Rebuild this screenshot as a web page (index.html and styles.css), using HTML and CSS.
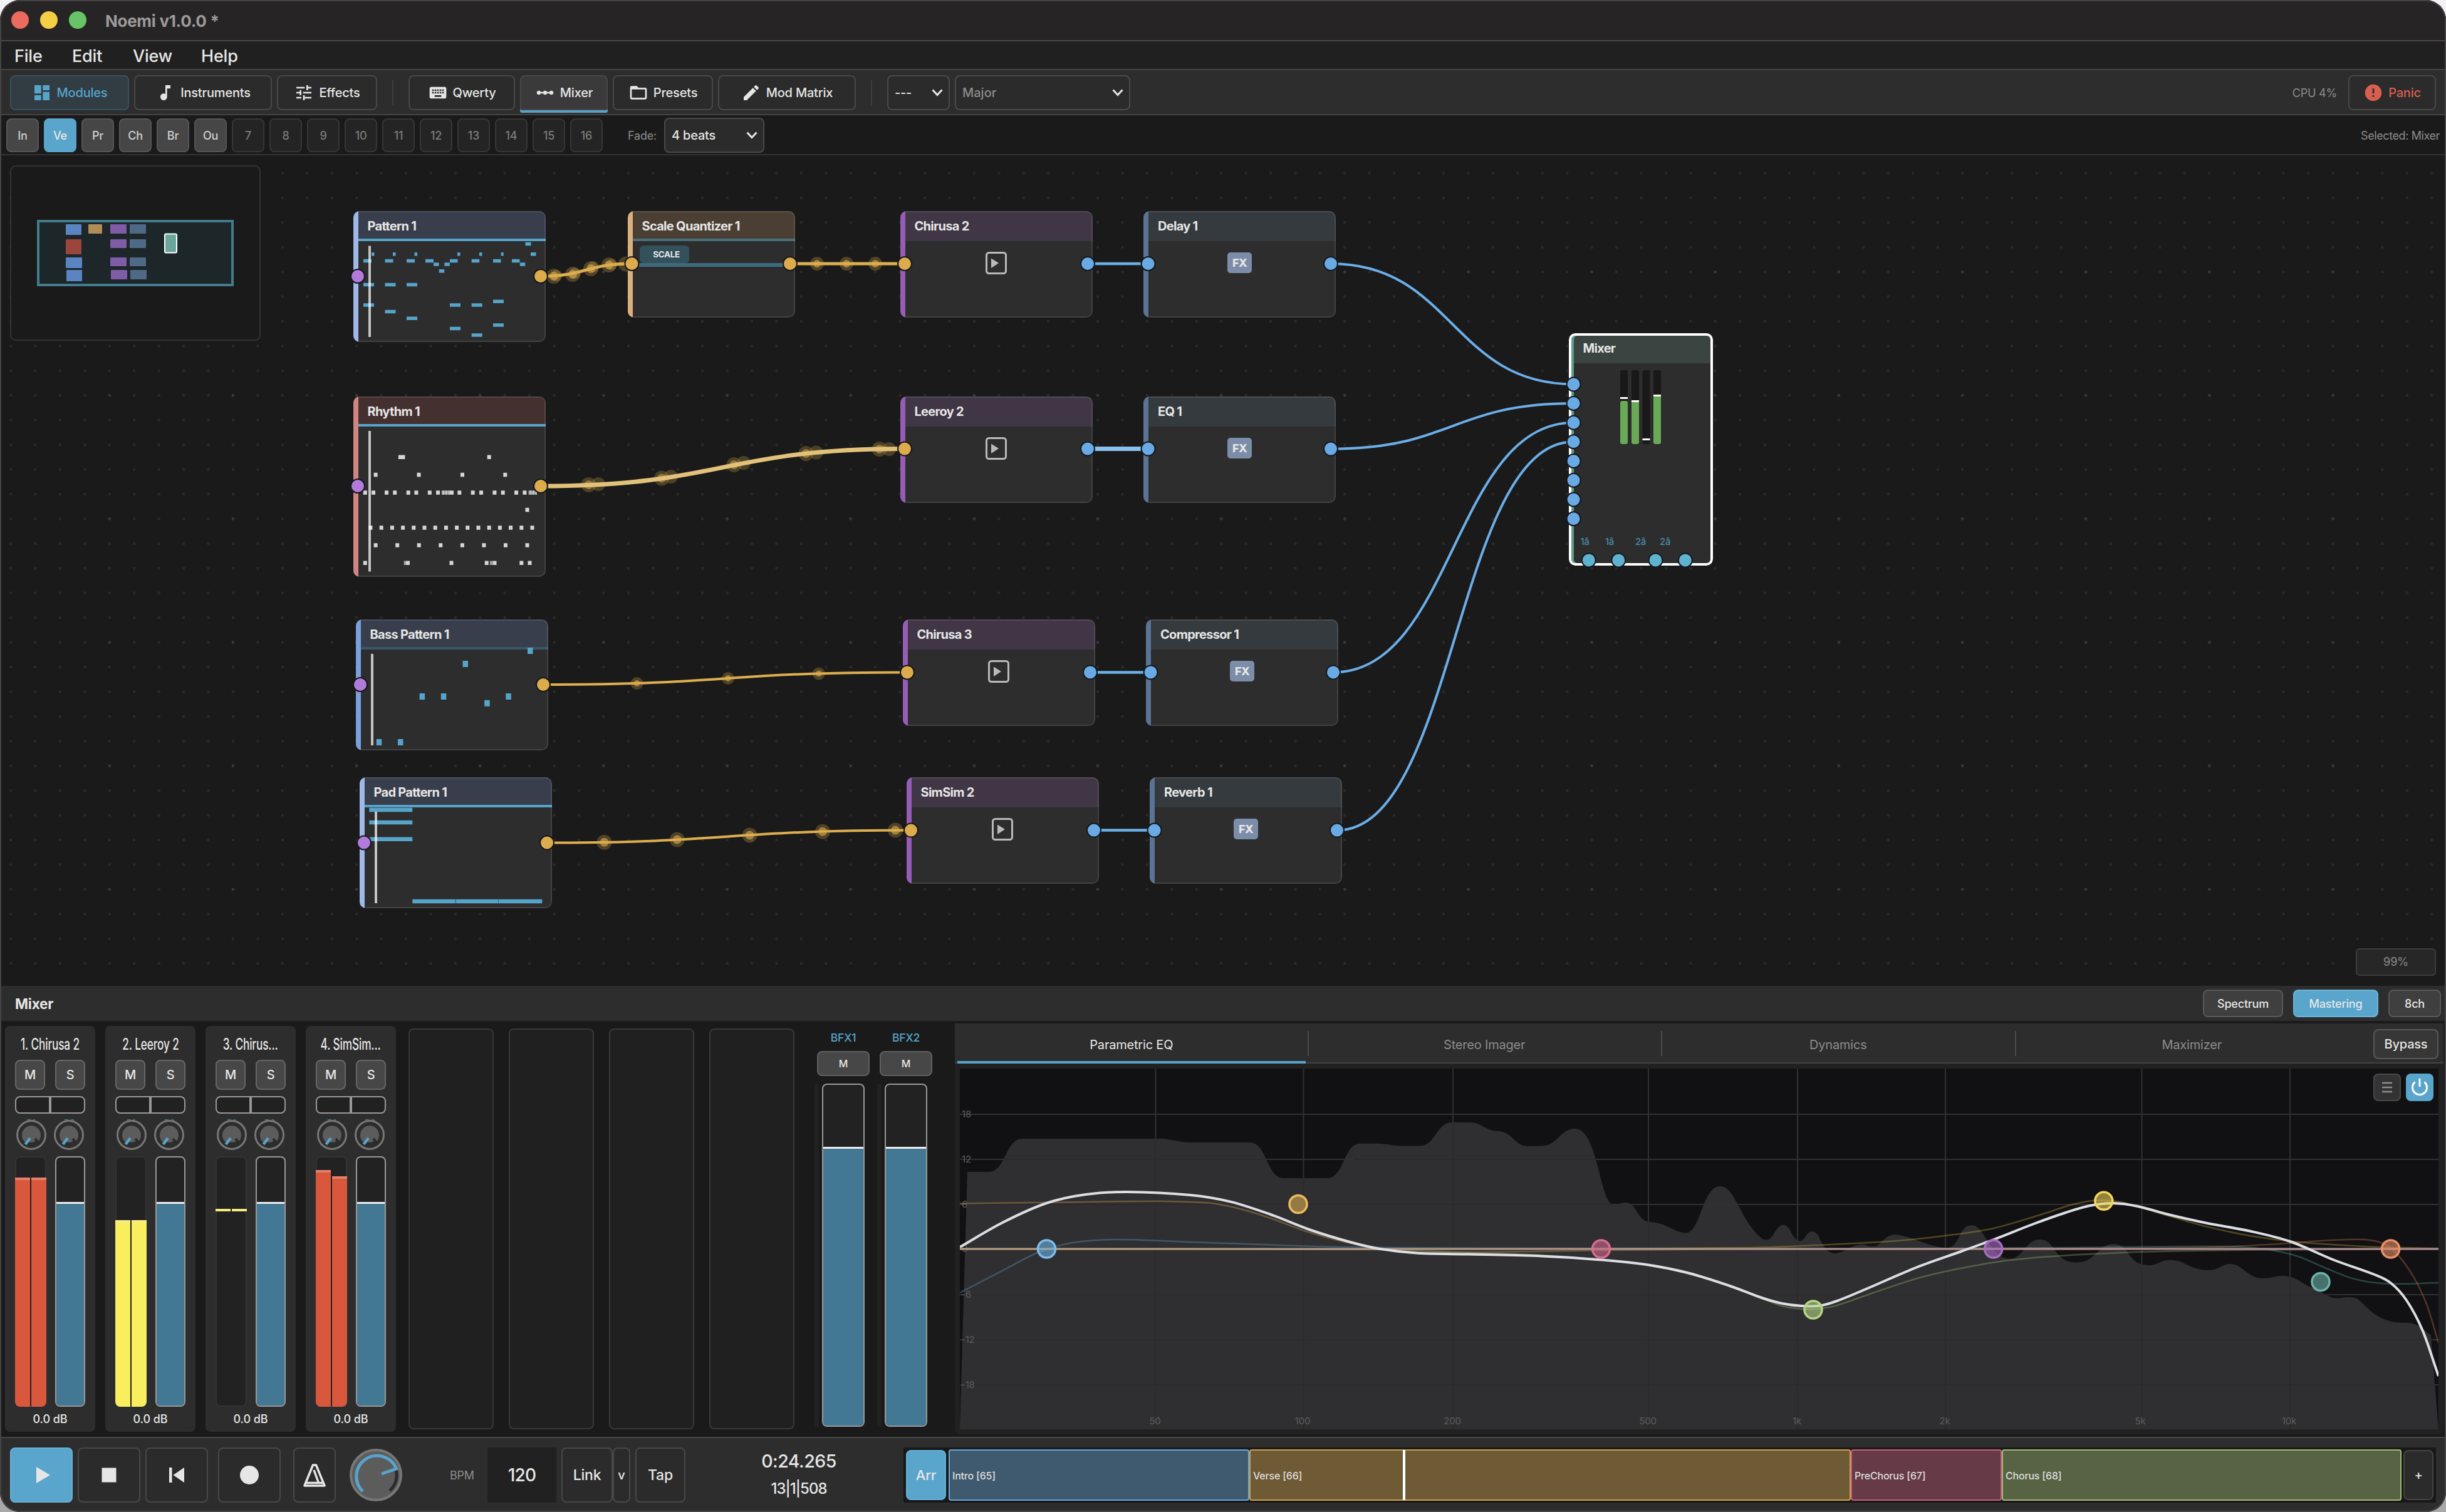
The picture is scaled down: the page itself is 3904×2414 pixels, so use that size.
FILE: index.html
```html
<!DOCTYPE html>
<html lang="en">
<head>
  <meta charset="UTF-8" />
  <meta name="viewport" content="width=device-width, initial-scale=1.0"/>
  <title>Noemi v1.0.0</title>
  <link rel="stylesheet" href="styles.css">
</head>
<body>

  <!-- shared icons -->
  <svg class="defs" width="0" height="0">
    <symbol id="i-dashboard" viewBox="0 0 24 24"><path d="M3 13h8V3H3v10zm0 8h8v-6H3v6zm10 0h8V11h-8v10zm0-18v6h8V3h-8z"/></symbol>
    <symbol id="i-note" viewBox="0 0 24 24"><path d="M12 3v10.55c-.59-.34-1.27-.55-2-.55-2.21 0-4 1.79-4 4s1.79 4 4 4 4-1.79 4-4V7h4V3h-6z"/></symbol>
    <symbol id="i-tune" viewBox="0 0 24 24"><path d="M3 17v2h6v-2H3zM3 5v2h10V5H3zm10 16v-2h8v-2h-8v-2h-2v6h2zM7 9v2H3v2h4v2h2V9H7zm14 4v-2H11v2h10zm-6-4h2V7h4V5h-4V3h-2v6z"/></symbol>
    <symbol id="i-keyboard" viewBox="0 0 24 24"><path d="M20 5H4c-1.1 0-1.99.9-1.99 2L2 17c0 1.1.9 2 2 2h16c1.1 0 2-.9 2-2V7c0-1.1-.9-2-2-2zm-9 3h2v2h-2V8zm0 3h2v2h-2v-2zM8 8h2v2H8V8zm0 3h2v2H8v-2zm-1 2H5v-2h2v2zm0-3H5V8h2v2zm9 7H8v-2h8v2zm0-4h-2v-2h2v2zm0-3h-2V8h2v2zm3 3h-2v-2h2v2zm0-3h-2V8h2v2z"/></symbol>
    <symbol id="i-linear" viewBox="0 0 24 24"><path d="M19.5 9.5c-1.03 0-1.9.62-2.29 1.5h-2.92C13.9 10.12 13.03 9.5 12 9.5s-1.9.62-2.29 1.5H6.79C6.4 10.12 5.53 9.5 4.5 9.5 3.12 9.5 2 10.62 2 12s1.12 2.5 2.5 2.5c1.03 0 1.9-.62 2.29-1.5h2.92c.39.88 1.26 1.5 2.29 1.5s1.9-.62 2.29-1.5h2.92c.39.88 1.26 1.5 2.29 1.5 1.38 0 2.5-1.12 2.5-2.5s-1.12-2.5-2.5-2.5z"/></symbol>
    <symbol id="i-folder" viewBox="0 0 24 24"><path d="M20 6h-8l-2-2H4c-1.1 0-1.99.9-1.99 2L2 18c0 1.1.9 2 2 2h16c1.1 0 2-.9 2-2V8c0-1.1-.9-2-2-2zm0 12H4V8h16v10z"/></symbol>
    <symbol id="i-pencil" viewBox="0 0 24 24"><path d="M3 17.25V21h3.75L17.81 9.94l-3.75-3.75L3 17.25zM20.71 7.04c.39-.39.39-1.02 0-1.41l-2.34-2.34c-.39-.39-1.02-.39-1.41 0l-1.83 1.83 3.75 3.75 1.83-1.83z"/></symbol>
    <symbol id="i-error" viewBox="0 0 24 24"><path d="M12 2C6.48 2 2 6.48 2 12s4.48 10 10 10 10-4.48 10-10S17.52 2 12 2zm1 15h-2v-2h2v2zm0-4h-2V7h2v6z"/></symbol>
    <symbol id="i-chevron" viewBox="0 0 18 12"><path d="M1.5 1.5L9 9.5l7.5-8" fill="none" stroke="#e6e6e6" stroke-width="3"/></symbol>
    <symbol id="i-play-box" viewBox="0 0 34 36"><rect x="1.5" y="1.5" width="31" height="33" rx="4" fill="none" stroke="#bababa" stroke-width="3"/><path d="M9 10.5L21 18 9 26z" fill="#bababa"/></symbol>
    <symbol id="i-send" viewBox="0 0 52 52">
      <circle cx="26" cy="26" r="22.5" fill="#2d2d2d" stroke="#777" stroke-width="3"/>
      <path d="M15.5 37A15 15 0 1 1 36.5 37L34 34l-3 3a14 14 0 0 1-10 0z" fill="#5c5c5c"/>
      <path d="M32 32l6 7" stroke="#2b2b2b" stroke-width="4"/>
      <path d="M24 31l-7.5 10" stroke="#57a4cb" stroke-width="4.5"/>
    </symbol>
  </svg>

  <div class="app">
    <header class="titlebar">
      <span class="light red"></span><span class="light yellow"></span><span class="light green"></span>
      <span class="app-title">Noemi v1.0.0 *</span>
    </header>

    <nav class="menubar">
      <span class="m-file">File</span><span class="m-edit">Edit</span><span class="m-view">View</span><span class="m-help">Help</span>
    </nav>

    <div class="toolbar">
      <button class="tool modules"><svg><use href="#i-dashboard"/></svg>Modules</button>
      <button class="tool instruments"><svg><use href="#i-note"/></svg>Instruments</button>
      <button class="tool effects"><svg><use href="#i-tune"/></svg>Effects</button>
      <span class="sep"></span>
      <button class="tool qwerty"><svg><use href="#i-keyboard"/></svg>Qwerty</button>
      <button class="tool mixer-btn"><svg><use href="#i-linear"/></svg>Mixer</button>
      <button class="tool presets"><svg><use href="#i-folder"/></svg>Presets</button>
      <button class="tool matrix"><svg><use href="#i-pencil"/></svg>Mod Matrix</button>
      <span class="sep"></span>
      <div class="select key"><span>---</span><svg><use href="#i-chevron"/></svg></div>
      <div class="select scale"><span>Major</span><svg><use href="#i-chevron"/></svg></div>
      <span class="cpu">CPU 4%</span>
      <button class="tool panic"><svg><use href="#i-error"/></svg>Panic</button>
    </div>

    <div class="scenebar">
      <button class="scene used">In</button>
      <button class="scene active">Ve</button>
      <button class="scene used">Pr</button>
      <button class="scene used">Ch</button>
      <button class="scene used">Br</button>
      <button class="scene used">Ou</button>
      <button class="scene">7</button>
      <button class="scene">8</button>
      <button class="scene">9</button>
      <button class="scene">10</button>
      <button class="scene">11</button>
      <button class="scene">12</button>
      <button class="scene">13</button>
      <button class="scene">14</button>
      <button class="scene">15</button>
      <button class="scene">16</button>
      <span class="fade">Fade:</span>
      <div class="select beats"><span>4 beats</span><svg><use href="#i-chevron"/></svg></div>
      <span class="selected">Selected: Mixer</span>
    </div>

    <main class="canvas">
      <svg class="layer" viewBox="0 248 3904 1326">
        <defs>
          <pattern id="dots" x="15.1" y="274.4" width="39.43" height="39.43" patternUnits="userSpaceOnUse"><rect width="4" height="4" fill="#2a2a2a"/></pattern>
          <pattern id="dots-major" x="172.8" y="432.1" width="197.15" height="197.15" patternUnits="userSpaceOnUse"><rect width="4" height="4" fill="#383838"/></pattern>
        </defs>
        <rect x="0" y="268" width="3904" height="1280" fill="url(#dots)"/>
        <rect x="0" y="268" width="3904" height="1280" fill="url(#dots-major)"/>
      </svg>

      <!-- overview -->
      <svg class="minimap" viewBox="16 264 400 280">
        <rect x="17" y="265" width="398" height="278" rx="8" fill="#1a1a1a" stroke="#333" stroke-width="2"/>
        <rect x="61" y="353" width="310" height="102" fill="#1d2629" stroke="#427c8e" stroke-width="4"/>
        <g fill="#5b85c2"><rect x="105" y="358" width="25" height="17" rx="1"/><rect x="105" y="411" width="26" height="17" rx="1"/><rect x="106" y="431" width="25" height="18" rx="1"/></g>
        <rect x="105" y="382" width="25" height="24" rx="1" fill="#9b453d"/>
        <rect x="141" y="358" width="22" height="15" rx="1" fill="#b18d59"/>
        <g fill="#7e5ca6"><rect x="176" y="358" width="26" height="15" rx="1"/><rect x="176" y="382" width="26" height="14" rx="1"/><rect x="176" y="411" width="26" height="14" rx="1"/><rect x="177" y="431" width="26" height="15" rx="1"/></g>
        <g fill="#4f6a86"><rect x="207" y="358" width="26" height="15" rx="1"/><rect x="207" y="382" width="26" height="14" rx="1"/><rect x="207" y="411" width="26" height="14" rx="1"/><rect x="208" y="431" width="26" height="15" rx="1"/></g>
        <rect x="263" y="373.5" width="19" height="30" rx="2" fill="#6aa69b" stroke="#fff" stroke-width="2"/>
      </svg>

      <!-- modules -->
      <section class="node pattern tall n-pattern1"><h3>Pattern 1</h3>
        <svg class="notes"><path stroke="#57a4cb" stroke-width="5.5" d="M274.5 52.6h9M29 68.8h4.5M63 68.8h4.5M97.5 68.8h4.5M166 68.8h4.5M201 68.8h4.5M235.7 68.8h4M283 68.8h8.5M16 79.5h13M50.5 79.5h13M85 79.5h13M115 79.5h13M154 79.5h12.5M188.7 79.5h12.5M223 79.5h12.5M253 79.5h12.5M128 85h8.5M145.4 85h8.5M265.8 85h8.5M136.7 95.7h8.5M16 117.4h17M50.5 117.4h17M85 117.4h17M223 144.3h17M16 149.9h17M154 149.9h17M188.7 149.9h17M50.5 160.5h17M85 171.2h17M223 181.9h17M154 187.4h17M188.7 198.1h17"/><path class="playhead" d="M26 55.4V201"/></svg>
      </section>
      <section class="node quant n-quant"><h3>Scale Quantizer 1</h3><span class="scale-line"></span><span class="scale-tag">SCALE</span></section>
      <section class="node synth n-chirusa2"><h3>Chirusa 2</h3><svg class="play-box"><use href="#i-play-box"/></svg></section>
      <section class="node fx n-delay"><h3>Delay 1</h3><span class="fx-tag">FX</span></section>

      <section class="node rhythm n-rhythm"><h3>Rhythm 1</h3>
        <svg class="notes"><g stroke="#d6d6d6" stroke-width="6.5"><path d="M71.9 96.8h10.5M213.7 96.8h6M32.6 125h6M101.5 125h6M171 125h6M239.3 125h6M15.8 153.4h6M29 153.4h6M50 153.4h6M63.2 153.4h6M84.7 153.4h6M97.4 153.4h6M118.8 153.4h6M132 153.4h6M154 153.4h6M166.3 153.4h6M187.7 153.4h6M201 153.4h6M222.4 153.4h6M235.7 153.4h6M257 153.4h6M270.4 153.4h6M274.5 181h6M15.8 265.7h6M84 265.7h6M153.5 265.7h6M209.7 265.7h6M222.5 265.7h6M265.3 265.7h6M278.5 265.7h6"/><path stroke-dasharray="6 11.2" d="M24.5 209.5H290"/><path stroke-dasharray="6 28.56" d="M32.6 237.6H282"/><path stroke="#a2a2a2" d="M140.8 153.4h13M279.5 153.4h13.5M80.6 265.7h3.4M217.8 265.7h4.7"/><path stroke-dasharray="1.5 3" d="M143 153.4h11M282 153.4h11"/></g><path class="playhead" d="M26 55V279.5"/></svg>
      </section>
      <section class="node synth n-leeroy"><h3>Leeroy 2</h3><svg class="play-box"><use href="#i-play-box"/></svg></section>
      <section class="node fx n-eq"><h3>EQ 1</h3><span class="fx-tag">FX</span></section>

      <section class="node pattern tall dim n-bass"><h3>Bass Pattern 1</h3>
        <svg class="notes"><path stroke="#57a4cb" stroke-width="10" d="M101.6 123h8.5M135.8 123h8.5M170.5 71h8.5M205.2 133.7h8.5M239.3 123h8.5M274 50h8.5M32.7 196h8.5M67 196h8.5"/><path class="playhead" d="M26 55V201"/></svg>
      </section>
      <section class="node synth n-chirusa3"><h3>Chirusa 3</h3><svg class="play-box"><use href="#i-play-box"/></svg></section>
      <section class="node fx n-comp"><h3>Compressor 1</h3><span class="fx-tag">FX</span></section>

      <section class="node pattern tall n-pad"><h3>Pad Pattern 1</h3>
        <svg class="notes"><path stroke="#57a4cb" stroke-width="6.5" d="M15.3 52h69M15.3 72h69M15.3 98.7h69M84.3 198h68.5M153.5 198h68M222 198h69.3"/><path class="playhead" d="M26 55V201"/></svg>
      </section>
      <section class="node synth n-simsim"><h3>SimSim 2</h3><svg class="play-box"><use href="#i-play-box"/></svg></section>
      <section class="node fx n-reverb"><h3>Reverb 1</h3><span class="fx-tag">FX</span></section>

      <section class="node mixer n-mixer"><h3>Mixer</h3></section>

      <!-- cables and ports -->
      <svg class="layer" viewBox="0 248 3904 1326">
        <g fill="#dcae4f" fill-opacity=".26">
          <circle cx="939.5" cy="774" r="12"/><circle cx="955" cy="773" r="11"/><circle cx="1056" cy="763.6" r="12"/><circle cx="1071" cy="761" r="11"/><circle cx="1171.6" cy="742" r="12"/><circle cx="1187" cy="739" r="11"/><circle cx="1286.4" cy="724" r="12"/><circle cx="1302.7" cy="722.5" r="11"/><circle cx="1403.6" cy="717" r="12"/><circle cx="1419" cy="717" r="11"/>
        </g>
        <g fill="#dcae4f" fill-opacity=".5">
          <circle cx="939.5" cy="774" r="7"/><circle cx="1056" cy="763.6" r="7"/><circle cx="1171.6" cy="742" r="7"/><circle cx="1286.4" cy="724" r="7"/><circle cx="1403.6" cy="717" r="7"/>
        </g>
        <g fill="none" stroke="#dcae4f" stroke-width="5">
          <path d="M863 441C936 441 936 421 1008 421M1261 421H1444"/>
          <path stroke="#e2c27a" stroke-width="7" d="M863 776C1153 776 1153 716.6 1444 716.6"/>
          <path stroke-width="4" d="M867 1093C1158 1093 1158 1073.4 1448 1073.4M873 1345.5C1163 1345.5 1163 1325.6 1454 1325.6"/>
        </g>
        <g fill="none" stroke="#6baee8" stroke-width="4">
          <path stroke-width="4.500" d="M1736 421H1833M1740 1073.4H1837M1746 1325.6H1843"/>
          <path stroke="#8ac0ee" stroke-width="7" d="M1736 716.6H1833"/>
          <path d="M2124 421C2318 421 2318 613.4 2511.6 613.4M2124 716.6C2318 716.6 2318 644 2511.6 644M2128 1073.4C2320 1073.4 2320 674.7 2511.6 674.7M2134 1325.6C2323 1325.6 2323 705.3 2511.6 705.3"/>
        </g>
        <g fill="#dcae4f" fill-opacity=".28">
          <circle cx="884" cy="441" r="12"/><circle cx="914" cy="438" r="12"/><circle cx="943" cy="429" r="12"/><circle cx="972" cy="423" r="12"/><circle cx="999" cy="421.5" r="12"/>
          <circle cx="888" cy="440" r="9"/><circle cx="918" cy="436" r="9"/><circle cx="947" cy="426" r="9"/><circle cx="976" cy="422.5" r="9"/>
          <circle cx="1304" cy="421" r="11"/><circle cx="1351" cy="421" r="11"/><circle cx="1397" cy="421" r="11"/>
          <circle cx="1016.5" cy="1091" r="10"/><circle cx="1162" cy="1083" r="10"/><circle cx="1306.8" cy="1075.5" r="10"/>
          <circle cx="964.5" cy="1344.7" r="12"/><circle cx="1080.8" cy="1340.5" r="12"/><circle cx="1196.6" cy="1333.5" r="12"/><circle cx="1313" cy="1327.7" r="12"/><circle cx="1429" cy="1325.6" r="12"/>
        </g>
        <g fill="#dcae4f" fill-opacity=".6">
          <circle cx="884" cy="441" r="7"/><circle cx="914" cy="438" r="7"/><circle cx="943" cy="429" r="7"/><circle cx="972" cy="423" r="7"/>
          <circle cx="1304" cy="421" r="6"/><circle cx="1351" cy="421" r="6"/><circle cx="1397" cy="421" r="6"/>
          <circle cx="1016.5" cy="1091" r="5"/><circle cx="1162" cy="1083" r="5"/><circle cx="1306.8" cy="1075.5" r="5"/>
          <circle cx="964.5" cy="1344.7" r="7"/><circle cx="1080.8" cy="1340.5" r="7"/><circle cx="1196.6" cy="1333.5" r="7"/><circle cx="1313" cy="1327.7" r="7"/><circle cx="1429" cy="1325.6" r="7"/>
        </g>
        <g fill="#b17bdb" class="port"><circle cx="571" cy="441" r="11"/><circle cx="571" cy="776" r="11"/><circle cx="575" cy="1093" r="11"/><circle cx="581" cy="1345.5" r="11"/></g>
        <g fill="#dcab4b" class="port"><circle cx="863" cy="441" r="11"/><circle cx="1008.4" cy="421" r="11"/><circle cx="1261" cy="421" r="11"/><circle cx="1444" cy="421" r="11"/><circle cx="863" cy="776" r="11"/><circle cx="1444" cy="716.6" r="11"/><circle cx="867" cy="1093" r="11"/><circle cx="1448" cy="1073.4" r="11"/><circle cx="873" cy="1345.5" r="11"/><circle cx="1454" cy="1325.6" r="11"/></g>
        <g fill="#69aae5" class="port">
          <circle cx="1736" cy="421" r="11"/><circle cx="1832.6" cy="421" r="11"/><circle cx="2124" cy="421" r="11"/>
          <circle cx="1736" cy="716.6" r="11"/><circle cx="1832.6" cy="716.6" r="11"/><circle cx="2124" cy="716.6" r="11"/>
          <circle cx="1740" cy="1073.4" r="11"/><circle cx="1836.6" cy="1073.4" r="11"/><circle cx="2128" cy="1073.4" r="11"/>
          <circle cx="1746" cy="1325.6" r="11"/><circle cx="1842.6" cy="1325.6" r="11"/><circle cx="2134" cy="1325.6" r="11"/>
          <circle cx="2511.6" cy="613.4" r="11"/><circle cx="2511.6" cy="644" r="11"/><circle cx="2511.6" cy="674.7" r="11"/><circle cx="2511.6" cy="705.3" r="11"/><circle cx="2511.6" cy="736" r="11"/><circle cx="2511.6" cy="766.7" r="11"/><circle cx="2511.6" cy="797.5" r="11"/><circle cx="2511.6" cy="828.3" r="11"/>
        </g>
        <g fill="#5fb3cf" class="port"><circle cx="2535.8" cy="894.4" r="11"/><circle cx="2583.3" cy="894.4" r="11"/><circle cx="2642.4" cy="894.4" r="11"/><circle cx="2689.8" cy="894.4" r="11"/></g>
        <g class="bus-label"><text x="2529.5" y="870">1â</text><text x="2569" y="870">1â</text><text x="2618.5" y="870">2â</text><text x="2657.6" y="870">2â</text></g>
        <g fill="#191919"><rect x="2586" y="591" width="12" height="118" rx="3"/><rect x="2604" y="591" width="12" height="118" rx="3"/><rect x="2621.5" y="591" width="12" height="118" rx="3"/><rect x="2639" y="591" width="12" height="118" rx="3"/></g>
        <g fill="#6aaa57"><rect x="2586" y="640" width="12" height="69" rx="3"/><rect x="2604" y="640" width="12" height="69" rx="3"/><rect x="2639" y="631" width="12" height="78" rx="3"/></g>
        <g fill="#fff"><rect x="2586" y="634" width="12" height="3"/><rect x="2604" y="639" width="12" height="3"/><rect x="2621.5" y="700" width="12" height="3"/><rect x="2639" y="630" width="12" height="3"/></g>
      </svg>

      <span class="zoom">99%</span>
    </main>

    <div class="panel-head">
      <h2>Mixer</h2>
      <button class="pill spectrum">Spectrum</button>
      <button class="pill mastering">Mastering</button>
      <button class="pill eight">8ch</button>
    </div>

    <div class="panel">
      <div class="strip">
        <div class="name"><span>1. Chirusa 2</span></div>
        <div class="ms"><button>M</button><button>S</button></div>
        <div class="pan"></div>
        <div class="sends"><svg><text x="18" y="12">B1</text><use href="#i-send"/></svg><svg><text x="18" y="12">B2</text><use href="#i-send"/></svg></div>
        <div class="levels">
          <div class="meter"><i class="hot" style="height:366px"></i><i class="hot" style="height:366px"></i></div>
          <div class="fader"><i></i></div>
        </div>
        <div class="db">0.0 dB</div>
      </div>
      <div class="strip">
        <div class="name"><span>2. Leeroy 2</span></div>
        <div class="ms"><button>M</button><button>S</button></div>
        <div class="pan"></div>
        <div class="sends"><svg><text x="18" y="12">B1</text><use href="#i-send"/></svg><svg><text x="18" y="12">B2</text><use href="#i-send"/></svg></div>
        <div class="levels">
          <div class="meter"><i class="warm" style="height:298px"></i><i class="warm" style="height:298px"></i></div>
          <div class="fader"><i></i></div>
        </div>
        <div class="db">0.0 dB</div>
      </div>
      <div class="strip">
        <div class="name"><span>3. Chirus...</span></div>
        <div class="ms"><button>M</button><button>S</button></div>
        <div class="pan"></div>
        <div class="sends"><svg><text x="18" y="12">B1</text><use href="#i-send"/></svg><svg><text x="18" y="12">B2</text><use href="#i-send"/></svg></div>
        <div class="levels">
          <div class="meter"><i class="peak" style="height:316px"></i><i class="peak" style="height:316px"></i></div>
          <div class="fader"><i></i></div>
        </div>
        <div class="db">0.0 dB</div>
      </div>
      <div class="strip">
        <div class="name"><span>4. SimSim...</span></div>
        <div class="ms"><button>M</button><button>S</button></div>
        <div class="pan"></div>
        <div class="sends"><svg><text x="18" y="12">B1</text><use href="#i-send"/></svg><svg><text x="18" y="12">B2</text><use href="#i-send"/></svg></div>
        <div class="levels">
          <div class="meter"><i class="hot" style="height:378px"></i><i class="hot" style="height:368px"></i></div>
          <div class="fader"><i></i></div>
        </div>
        <div class="db">0.0 dB</div>
      </div>
      <div class="slot"></div>
      <div class="slot"></div>
      <div class="slot"></div>
      <div class="slot"></div>

      <div class="buses">
        <div class="bus"><span>BFX1</span><button>M</button><div class="bus-level"><b></b><div class="fader"><i></i></div></div></div>
        <div class="bus"><span>BFX2</span><button>M</button><div class="bus-level"><b></b><div class="fader"><i></i></div></div></div>
      </div>

      <div class="master">
        <div class="tabs">
          <span class="tab on">Parametric EQ</span>
          <span class="tab">Stereo Imager</span>
          <span class="tab">Dynamics</span>
          <span class="tab last">Maximizer</span>
          <button class="bypass">Bypass</button>
        </div>
        <div class="plot">
          <svg class="eq" viewBox="1532 1706 2360 576">
            <defs><linearGradient id="zero" gradientUnits="userSpaceOnUse" x1="1532" x2="3892" y1="0" y2="0"><stop offset="0" stop-color="#b89c80"/><stop offset=".4" stop-color="#b0958a"/><stop offset=".6" stop-color="#ad8c8c"/><stop offset="1" stop-color="#ab8690"/></linearGradient></defs>
            <path stroke="#303033" stroke-width="2" d="M1844.5 1706V2282M2080.5 1706V2282M2319 1706V2282M2631 1706V2282M2869 1706V2282M3105 1706V2282M3418.5 1706V2282M3655 1706V2282M1532 1779H3892M1532 1851H3892M1532 1923H3892M1532 2067H3892M1532 2139H3892M1532 2211H3892"/>
            <!-- spectrum -->
            <path fill="#313133" fill-opacity=".95" d="M1532 2282L1544 1871H1578C1606 1871 1604 1818 1632 1818H1852C1870 1818 1880 1824 1900 1824H1995C2022 1824 2022 1881 2048 1881H2118C2146 1881 2144 1826 2171 1825.7H2196C2215 1826 2222 1829.5 2241 1829.5H2266C2292 1829 2292 1792 2318 1792H2344C2368 1792 2368 1806 2394 1806C2416 1810 2418 1830 2439 1830L2462 1829.5C2486 1829 2490 1802 2514 1802C2550 1802 2554 1922 2574 1922C2584 1924 2584 1920 2597 1920C2612 1922 2614 1950 2633 1951C2660 1952 2668 1966 2691 1968.7C2716 1966 2716 1894 2746 1894C2768 1894 2776 1942 2806 1972Q2820 1987 2830 1972Q2847 1940 2860 1970Q2873 1992 2883 1972Q2892 1960 2902 1972Q2914 2002 2928 2001C2944 2001 2952 1987 2974 1986.7Q2984 1990 2990 1990C3004 1990 3006 1971 3025 1971C3050 1973 3080 1992 3108 1992C3128 1992 3126 1956 3147 1956C3168 1956 3176 2009.7 3208 2009.7C3230 2009 3232 1979 3256 1979C3282 1979 3276 2015.8 3315 2015.8C3346 2015 3348 1986 3374 1986C3400 1986 3394 2020 3430 2020C3444 2020 3448 2011.7 3463.5 2011.7C3486 2011 3496 2028 3526 2028C3542 2028 3546 2018 3560 2018C3580 2018 3586 2041 3612 2041C3624 2041 3630 2037 3643 2037C3664 2037 3672 2048 3686 2054C3708 2062 3716 2074 3734 2072.5Q3748 2070 3758 2072C3776 2078 3786 2112 3838 2112C3858 2112 3862 2118 3879.7 2131.6L3892 2282z"/>
            <path stroke="#2a2a2c" stroke-opacity=".8" stroke-width="2" d="M1844.5 1818V2282M2080.5 1881V2282M2319 1792V2282M2631 1950V2282M2869 1982V2282M3105 1992V2282M3418.5 2020V2282M3655 2040V2282M1604 1851H2020M2160 1851H2546M1540 1923H2574M1540 2067H3730M1540 2139H3880M1540 2211H3884"/>
            <!-- axis labels -->
            <g class="axis"><text x="1535" y="1784">18</text><text x="1535" y="1856">12</text><text x="1535" y="1928">6</text><text x="1535" y="1999">0</text><text x="1534" y="2072">-6</text><text x="1534" y="2144">-12</text><text x="1534" y="2216">-18</text></g>
            <g class="axis mid"><text x="1843.5" y="2274">50</text><text x="2079" y="2274">100</text><text x="2318" y="2274">200</text><text x="2630" y="2274">500</text><text x="2868" y="2274">1k</text><text x="3104" y="2274">2k</text><text x="3416" y="2274">5k</text><text x="3653.5" y="2274">10k</text></g>
            <!-- single bands -->
            <g class="band">
              <path stroke="#6babd8" data-points="1532,2064 1607,2025 1656,2000 1712,1984 1782,1979 1900,1983 2155,1991 2538,1993 3892,1994"/>
              <path stroke="#eab14e" data-points="1532,1921.5 1700,1919.5 1800,1918 1850,1917.7 1900,1919 1938,1921.5 1983,1931 2028,1945 2085,1966 2155,1985 2203,1994 2257,1999 2378,1999 2538,1996.5 2729,1994.6 3892,1994"/>
              <path stroke="#a7cb78" data-points="1532,1994 2200,1995 2346,2000 2461,2004 2557,2011 2631,2020 2697,2034 2761,2054 2812,2073 2844,2085 2876,2090 2900,2090 2932,2084 2990,2064 3060,2041 3124,2026 3207,2012 3310,2003.6 3444,1998 3604,1995.5 3892,1994"/>
              <path stroke="#dcb83f" data-points="1532,1994 2538,1994 2793,1992 2900,1988 3028,1981 3111,1972 3182,1961 3258,1939 3310,1922.5 3348,1916.5 3386,1919.5 3450,1938 3515,1956.6 3591,1973 3668,1983 3796,1991 3892,1993"/>
              <path stroke="#5bb0a5" data-points="3000,1994 3300,1992 3476,1990 3572,1990.5 3623,1995.5 3668,2006 3713,2025 3758,2042 3809,2049.5 3892,2048"/>
              <path stroke="#e0815a" data-points="3000,1994 3400,1993 3540,1991 3636,1986 3732,1979.6 3784,1980 3815,1992 3847,2030 3873,2082 3892,2144"/>
            </g>
            <path d="M1532 1994H3892" stroke="url(#zero)" stroke-width="3"/>
            <!-- summed response -->
            <path class="sum" data-points="1532,1991 1600,1952 1670,1921 1733,1907 1800,1903 1900,1908 1964,1918.6 2028,1939 2091,1963.5 2155,1983 2203,1994 2263,2000.7 2346,2002.6 2461,2005.5 2557,2011.6 2631,2019.6 2697,2033 2761,2053 2812,2072 2844,2081 2876,2085 2905,2084.5 2932,2077 2983,2056 3060,2023 3130,1998 3182,1979 3246,1954 3297,1936 3335,1925 3374,1921 3412,1926 3463,1939.5 3521,1952.5 3591,1965.5 3655,1982 3726,2012 3790,2035 3816,2048.5 3841,2076 3867,2125 3892,2197"/>
            <g class="handles">
              <circle cx="1670.5" cy="1994" stroke="#7bbdf2" fill="#6fb0e0" r="14"/>
              <circle cx="2072" cy="1922.5" stroke="#efbb5b" fill="#dcae55" r="14"/>
              <circle cx="2555.5" cy="1994" stroke="#d96b91" fill="#d0688c" r="14"/>
              <circle cx="2894" cy="2091" stroke="#b5d685" fill="#b5d685" r="14"/>
              <circle cx="3181.7" cy="1994" stroke="#a96cc3" fill="#a96cc3" r="14"/>
              <circle cx="3357.8" cy="1917.3" stroke="#f4d65c" fill="#edd058" r="14"/>
              <circle cx="3815.6" cy="1994" stroke="#ea9068" fill="#ea9068" r="14"/>
              <circle cx="3704" cy="2046.5" stroke="#6bb3aa" fill="#6bb3aa" r="14"/>
            </g>
          </svg>
          <div class="plot-tools">
            <span class="list"><svg viewBox="0 0 44 44"><path d="M14 15h16M14 22h16M14 29h16" stroke="#8f8f8f" stroke-width="2.5"/></svg></span>
            <span class="power"><svg viewBox="0 0 44 44"><path d="M14.5 13.5A11.5 11.5 0 1 0 29.5 13.5M22 8v13" fill="none" stroke="#fff" stroke-width="3"/></svg></span>
          </div>
        </div>
      </div>
    </div>

    <footer class="transport">
      <button class="t t-play"><svg viewBox="0 0 24 28"><path d="M1 1l22 13L1 27z"/></svg></button>
      <button class="t t-stop"><svg viewBox="0 0 24 24"><path d="M.5.5h23v23H.5z"/></svg></button>
      <button class="t t-prev"><svg viewBox="0 0 24 24"><path d="M0 0h4.5v24H0zM24 0v24L6.5 12z"/></svg></button>
      <button class="t t-rec"><svg viewBox="0 0 32 32"><circle cx="16" cy="16" r="15"/></svg></button>
      <button class="t t-metro"><svg viewBox="0 0 36 40"><path d="M15.5 4h5L34 37H2L15.5 4zM4 32.500h28M17 12l7 19" fill="none" stroke="#e6e6e6" stroke-width="3.5" stroke-linejoin="round"/></svg></button>
      <svg class="tempo-knob" viewBox="0 0 84 84">
        <circle cx="42" cy="42" r="40" fill="#5c5c5c" stroke="#777" stroke-width="4"/>
        <path d="M64 67A33 33 0 0 0 74 34" fill="none" stroke="#2c2c2c" stroke-width="5"/>
        <path d="M21 68A33 33 0 1 1 74.5 32L51 40" fill="none" stroke="#57a4cb" stroke-width="5"/>
      </svg>
      <span class="bpm-label">BPM</span>
      <span class="bpm">120</span>
      <button class="t t-link">Link</button>
      <button class="t t-v">v</button>
      <button class="t t-tap">Tap</button>
      <div class="clock"><span class="time">0:24.265</span><span class="pos">13|1|508</span></div>
      <div class="arrangement">
        <button class="arr">Arr</button>
        <div class="clip intro">Intro [65]</div>
        <div class="clip verse">Verse [66]<i class="cursor"></i></div>
        <div class="clip pre">PreChorus [67]</div>
        <div class="clip chorus">Chorus [68]</div>
        <button class="add">+</button>
      </div>
    </footer>
  </div>

  <script>
    // Draw each response as a smooth curve through its sampled points
    document.querySelectorAll('[data-points]').forEach(function (path) {
      const p = path.dataset.points.split(' ').map(s => s.split(',').map(Number));
      const slope = i => {
        const a = p[Math.max(i - 1, 0)];
        const b = p[Math.min(i + 1, p.length - 1)];
        return (b[1] - a[1]) / (b[0] - a[0]);
      };
      let d = `M${p[0][0]} ${p[0][1]}`;
      for (let i = 0; i < p.length - 1; i++) {
        const w = (p[i + 1][0] - p[i][0]) / 3;
        d += `C${p[i][0] + w} ${p[i][1] + w * slope(i)} ${p[i + 1][0] - w} ${p[i + 1][1] - w * slope(i + 1)} ${p[i + 1][0]} ${p[i + 1][1]}`;
      }
      path.setAttribute('d', d);
    });
  </script>

</body>
</html>
```
FILE: styles.css
```css
* {
  box-sizing: border-box;
}

body {
  margin: 0;
  background: linear-gradient(to bottom, #f2f2f4, #a8a8a8);
  font-family: Inter, "Liberation Sans", sans-serif;
  font-size: 20px;
  font-weight: 500;
  color: #e6e6e6;
  letter-spacing: -0.2px;
}

button {
  font: inherit;
  letter-spacing: inherit;
  color: inherit;
  padding: 0;
  margin: 0;
}

h2, h3 {
  margin: 0;
}

.defs {
  position: absolute;
}

.app {
  position: relative;
  display: flex;
  flex-direction: column;
  width: 3904px;
  height: 2414px;
  border-radius: 32px;
  overflow: hidden;
  background: #1a1a1a;
}

.app::after {
  content: "";
  position: absolute;
  inset: 0;
  border: 2px solid #444;
  border-radius: 32px;
}

/* title and menu */
.titlebar {
  display: flex;
  align-items: center;
  height: 66px;
  padding-left: 18px;
  background: #262425;
  border-bottom: 2px solid #484848;
}

.light {
  width: 28px;
  height: 28px;
  margin-right: 18px;
  border-radius: 50%;
}

.red { background: #ec6a5e; }
.yellow { background: #f4cf45; }
.green { background: #68c466; }

.app-title {
  margin-left: 12px;
  padding-top: 2px;
  font-size: 26px;
  font-weight: 700;
  color: #9c9a9b;
  letter-spacing: -0.3px;
}

.menubar {
  display: flex;
  align-items: center;
  height: 46px;
  padding: 2px 0 0 23px;
  background: #202020;
  border-bottom: 2px solid #444;
  font-size: 27px;
}

.m-file { width: 92px; }
.m-edit { width: 97px; }
.m-view { width: 109px; }

/* toolbar */
.toolbar {
  display: flex;
  align-items: center;
  gap: 8px;
  height: 72px;
  padding: 2px 16px 0;
  background: #2d2d2d;
  border-bottom: 2px solid #444;
}

.tool {
  display: flex;
  align-items: center;
  justify-content: center;
  gap: 8px;
  height: 56px;
  background: #2b2b2b;
  border: 2px solid #484848;
  border-radius: 8px;
}

.tool svg {
  width: 32px;
  height: 32px;
  fill: currentColor;
}

.modules {
  width: 190px;
  background: #313d43;
  border-color: #345260;
  color: #57a4cb;
}

.instruments { width: 220px; }
.effects { width: 160px; }
.qwerty { width: 170px; }
.presets { width: 160px; }
.matrix { width: 220px; }

.mixer-btn {
  width: 140px;
  background: #3a3a3a;
  box-shadow: 0 4px 0 #57a4cb;
  border-bottom-left-radius: 3px;
  border-bottom-right-radius: 3px;
}

.sep {
  width: 2px;
  height: 40px;
  margin: 0 16px;
  background: #3e3e3e;
}

.select {
  display: flex;
  align-items: center;
  justify-content: space-between;
  height: 56px;
  padding: 0 9px 0 10px;
  background: #2b2b2b;
  border: 2px solid #4a4a4a;
  border-radius: 8px;
}

.select svg {
  width: 18px;
  height: 12px;
}

.key { width: 100px; }

.scale {
  width: 280px;
  color: #8c8c8c;
  letter-spacing: 0;
}

.cpu {
  margin-left: auto;
  margin-right: 10px;
  font-size: 18px;
  font-weight: 400;
  color: #8c8c8c;
}

.panic {
  width: 140px;
  color: #d75f50;
}

/* scenes */
.scenebar {
  display: flex;
  align-items: center;
  gap: 8px;
  height: 64px;
  padding: 2px 10px 0;
  border-bottom: 2px solid #333;
}

.scene {
  width: 52px;
  height: 54px;
  background: #242424;
  border: 2px solid #363636;
  border-radius: 8px;
  font-size: 18px;
  color: #7a7a7a;
}

.scene.used {
  background: #464646;
  border-color: #555;
  color: #d0d0d0;
}

.scene.active {
  background: #59a5cc;
  border-color: #59a5cc;
  color: #e8e8e8;
}

.fade {
  width: 50px;
  margin-left: 32px;
  font-size: 18px;
  font-weight: 400;
  color: #8c8c8c;
}

.beats {
  width: 160px;
}

.selected {
  margin-left: auto;
  font-size: 18px;
  font-weight: 400;
  color: #8c8c8c;
  letter-spacing: -0.4px;
}

/* canvas */
.canvas {
  position: relative;
  height: 1326px;
}

.layer {
  position: absolute;
  left: 0;
  top: 0;
  width: 3904px;
  height: 1326px;
}

.port circle {
  stroke: #15181c;
  stroke-width: 2px;
}

.bus-label {
  font-size: 15px;
  font-weight: 400;
  text-anchor: middle;
  fill: #4c9ab8;
}

.minimap {
  position: absolute;
  left: 16px;
  top: 16px;
  width: 400px;
  height: 280px;
}

.node {
  position: absolute;
  width: 307px;
  height: 170px;
  background: #2d2d2d;
  border-radius: 10px;
  overflow: hidden;
}

.node::before {
  content: "";
  position: absolute;
  inset: 0;
  border: 2px solid rgba(255, 255, 255, 0.1);
  border-radius: 10px;
}

.node::after {
  content: "";
  position: absolute;
  left: 0;
  top: 0;
  bottom: 0;
  width: 8px;
  background: var(--stripe);
}

.node h3 {
  height: 48px;
  padding-left: 23px;
  background: var(--head);
  font-size: 20px;
  font-weight: 700;
  line-height: 49px;
  letter-spacing: -0.7px;
}

.tall { height: 209px; }
.pattern { --stripe: #9fb8e8; --head: #383e4b; }
.pattern h3, .rhythm h3 { border-bottom: 4px solid #57a4cb; }
.dim { --stripe: #7a9fdd; }
.dim h3 { border-bottom-color: #39596a; }
.rhythm { --stripe: #cf8682; --head: #453030; height: 288px; }
.quant { --stripe: #dbb07c; --head: #4b3f33; width: 267px; }
.quant h3 { border-bottom: 4px solid #46707d; }
.synth { --stripe: #965db6; --head: #403645; }
.fx { --stripe: #5b7394; --head: #343a3e; }

.n-pattern1 { left: 563.5px; top: 88.5px; }
.n-quant { left: 1001.5px; top: 88.5px; }
.n-chirusa2 { left: 1436.5px; top: 88.5px; }
.n-delay { left: 1825px; top: 88.5px; }
.n-rhythm { left: 563.5px; top: 384.5px; }
.n-leeroy { left: 1436.5px; top: 384.5px; }
.n-eq { left: 1825px; top: 384.5px; }
.n-bass { left: 567.5px; top: 741px; }
.n-chirusa3 { left: 1440.5px; top: 741px; }
.n-comp { left: 1829px; top: 741px; }
.n-pad { left: 573.5px; top: 993px; }
.n-simsim { left: 1446.5px; top: 993px; }
.n-reverb { left: 1835px; top: 993px; }

.mixer {
  --stripe: transparent;
  --head: #3a4441;
  width: 230px;
  height: 371px;
}

.n-mixer { left: 2503.5px; top: 283.5px; }

.mixer::before {
  border: 4px solid #fff;
  box-shadow: inset 4px 0 0 #5f9d8b;
}

.notes {
  position: absolute;
  left: 0;
  top: 0;
  width: 307px;
  height: 288px;
}

.playhead {
  stroke: rgba(255, 255, 255, 0.72);
  stroke-width: 4px;
}

.play-box {
  position: absolute;
  left: 136px;
  top: 65px;
  width: 34px;
  height: 36px;
}

.fx-tag {
  position: absolute;
  left: 134px;
  top: 66px;
  width: 39px;
  height: 33px;
  background: #7b8da8;
  border-radius: 5px;
  font-size: 18px;
  font-weight: 800;
  line-height: 33px;
  text-align: center;
  letter-spacing: -0.6px;
}

.scale-tag {
  position: absolute;
  left: 19px;
  top: 55px;
  width: 79px;
  height: 28px;
  background: #34505b;
  border-radius: 6px;
  font-size: 13.5px;
  font-weight: 700;
  line-height: 29px;
  padding-left: 7px;
  text-align: center;
  letter-spacing: -0.4px;
}

.scale-line {
  position: absolute;
  left: 8px;
  right: 10px;
  top: 83px;
  height: 6px;
  background: #3d6b7e;
}

.zoom {
  position: absolute;
  right: 16px;
  bottom: 16px;
  width: 128px;
  height: 44px;
  background: #272727;
  border: 2px solid #3d3d3d;
  border-radius: 6px;
  font-size: 18px;
  line-height: 40px;
  text-align: center;
  color: #808080;
}

/* mixer panel */
.panel-head {
  display: flex;
  align-items: center;
  gap: 16px;
  height: 56px;
  padding: 0 8px 0 24px;
  background: #2d2d2d;
}

.panel-head h2 {
  flex: 1;
  font-size: 22.5px;
  font-weight: 700;
}

.pill {
  height: 44px;
  background: #3f3f3f;
  border: 2px solid #585858;
  border-radius: 8px;
  font-size: 18px;
}

.spectrum { width: 128px; }
.eight { width: 84px; }

.mastering {
  width: 136px;
  background: #59a5cc;
  border-color: #6cb4d8;
}

.panel {
  display: flex;
  gap: 16px;
  height: 664px;
  padding: 8px 4px 8px 8px;
}

.strip {
  display: flex;
  flex-direction: column;
  width: 144px;
  padding: 0 16px;
  background: #2d2d2d;
  border-radius: 8px;
}

.strip > div {
  flex-shrink: 0;
}

.name {
  display: flex;
  justify-content: center;
  height: 54px;
  padding-top: 11px;
  font-size: 25px;
  line-height: 36px;
  white-space: nowrap;
}

.name span {
  transform: scaleX(0.69);
}

.ms {
  display: flex;
  justify-content: space-between;
  margin-bottom: 10px;
}

.ms button {
  width: 48px;
  height: 48px;
  background: #474747;
  border: 2px solid #666;
  border-radius: 8px;
}

.pan {
  height: 28px;
  margin-bottom: 8px;
  background: linear-gradient(to right, transparent 52px, #999 52px, #999 56px, transparent 56px) #212121;
  border: 2px solid #999;
  border-radius: 8px;
}

.sends {
  display: flex;
  gap: 8px;
  height: 60px;
}

.sends svg {
  width: 52px;
  height: 52px;
  overflow: visible;
}

.sends text {
  font-size: 14px;
  fill: #427b95;
}

.levels {
  display: flex;
  justify-content: space-between;
  height: 400px;
}

.meter {
  display: flex;
  align-items: flex-end;
  gap: 2px;
  width: 50px;
  height: 400px;
  background: #222;
  border-radius: 8px;
  box-shadow: inset 0 0 0 2px #343434;
  overflow: hidden;
}

.meter i {
  width: 24px;
}

.hot {
  background: #d9573c;
  border-top: 4px solid #e5806a;
}

.warm {
  background: #f9ee5d;
  border-top: 4px solid #f7ec86;
}

.peak {
  border-top: 4px solid #f7ec7c;
}

.fader {
  display: flex;
  align-items: flex-end;
  width: 48px;
  background: #222;
  border: 2px solid #999;
  border-radius: 8px;
  overflow: hidden;
}

.fader i {
  width: 100%;
  height: 325px;
  background: #437894;
  border-top: 3px solid #eee;
}

.db {
  font-size: 18px;
  line-height: 40px;
  text-align: center;
  letter-spacing: -0.1px;
}

.slot {
  width: 136px;
  margin: 4px;
  background: #202020;
  border: 2px solid #383838;
  border-radius: 8px;
}

.buses {
  display: flex;
  gap: 12px;
  margin: 0 20px 0 12px;
}

.bus {
  display: flex;
  flex-direction: column;
  align-items: flex-end;
  width: 88px;
}

.bus span {
  width: 84px;
  height: 40px;
  font-size: 17.5px;
  line-height: 38px;
  text-align: center;
  color: #57a4cb;
}

.bus button {
  width: 84px;
  height: 40px;
  background: #474747;
  border: 2px solid #606060;
  border-radius: 8px;
  font-size: 16px;
}

.bus-level {
  display: flex;
  gap: 5px;
  width: 88px;
  height: 548px;
  margin-top: 12px;
}

.bus-level b {
  width: 7px;
  background: #212121;
}

.bus-level .fader {
  width: 68px;
}

.bus-level .fader i {
  height: 445px;
}

/* mastering */
.master {
  display: flex;
  flex-direction: column;
  flex: 1;
  margin: -4px 0;
  background: #212121;
  border-radius: 0 0 8px 8px;
}

.tabs {
  display: flex;
  align-items: center;
  height: 64px;
  background: #2d2d2d;
  border-bottom: 2px solid #444;
}

.tab {
  flex: 0 0 564.5px;
  height: 64px;
  margin-bottom: -2px;
  padding-right: 3px;
  line-height: 69px;
  text-align: center;
  font-weight: 400;
  color: #8c8c8c;
  background: linear-gradient(#4a4a4a, #4a4a4a) right 12px / 2px 40px no-repeat;
}

.tab.on {
  padding-right: 1px;
  color: #e6e6e6;
  background: linear-gradient(#57a4cb, #57a4cb) 4px 60px / 556px 4px no-repeat,
    linear-gradient(#4a4a4a, #4a4a4a) right 12px / 2px 40px no-repeat;
}

.tab.last {
  background: none;
}

.bypass {
  width: 104px;
  height: 48px;
  margin: 3px 0 0 6px;
  background: #373737;
  border: 2px solid #585858;
  border-radius: 8px;
}

.plot {
  position: relative;
  width: 2360px;
  height: 576px;
  margin: 8px 0 0 8px;
  background: #111113;
}

.eq {
  display: block;
  width: 2360px;
  height: 576px;
}

.axis {
  font-size: 15px;
  font-weight: 400;
  fill: #5c5c5e;
}

.axis.mid {
  text-anchor: middle;
}

.band path {
  fill: none;
  stroke-opacity: 0.32;
  stroke-width: 2.5px;
}

.sum {
  fill: none;
  stroke: #dcdee3;
  stroke-width: 4px;
}

.handles circle {
  stroke-width: 3.5px;
  fill-opacity: 0.6;
}

.plot-tools {
  position: absolute;
  right: 8px;
  top: 8px;
  display: flex;
  gap: 8px;
}

.plot-tools span {
  width: 44px;
  height: 44px;
  border-radius: 8px;
}

.list {
  background: #333;
  box-shadow: inset 0 0 0 2px #484848;
}

.power {
  background: #59a5cc;
}

/* transport */
.transport {
  display: flex;
  align-items: center;
  height: 120px;
  padding: 0 16px;
  background: #2d2d2d;
  border-top: 2px solid #484848;
}

.t {
  display: flex;
  align-items: center;
  justify-content: center;
  flex: none;
  width: 100px;
  height: 88px;
  margin-right: 8px;
  background: #2b2b2b;
  border: 2px solid #484848;
  border-radius: 8px;
  font-size: 23px;
}

.t svg {
  width: 24px;
  height: 24px;
  fill: #e6e6e6;
}

.t.t-play {
  padding-left: 5px;
  background: #59a5cc;
  border-color: #66b0d6;
}

.t.t-play svg { height: 28px; }
.t.t-prev { margin-right: 16px; }
.t.t-rec { margin-right: 20px; }
.t.t-rec svg { width: 32px; height: 32px; }
.t.t-metro { width: 68px; margin-right: 22px; }
.t.t-metro svg { width: 36px; height: 40px; }
.t.t-link { width: 82px; margin-right: 0; }
.t.t-v { width: 28px; font-size: 20px; }
.t.t-tap { width: 80px; margin-right: 0; }

.tempo-knob {
  flex: none;
  width: 84px;
  height: 84px;
}

.bpm-label {
  width: 60px;
  margin-left: 76px;
  font-size: 18px;
  font-weight: 400;
  color: #8c8c8c;
}

.bpm {
  width: 110px;
  height: 88px;
  margin-right: 8px;
  background: #212121;
  font-size: 28px;
  line-height: 88px;
  text-align: center;
  letter-spacing: -0.8px;
}

.clock {
  display: flex;
  flex-direction: column;
  align-items: center;
  flex: 1;
  padding-left: 14px;
}

.time {
  font-size: 28.5px;
  line-height: 44px;
  letter-spacing: -0.5px;
}

.pos {
  font-size: 24px;
  line-height: 44px;
  letter-spacing: -1px;
}

.arrangement {
  display: flex;
  align-items: center;
  flex: none;
  width: 2446px;
  height: 88px;
  padding-left: 4px;
  background: #181818;
}

.arr {
  width: 64px;
  height: 80px;
  margin-right: 4px;
  background: #59a5cc;
  border: 2px solid #66b0d6;
  border-radius: 8px;
  font-size: 22px;
}

.clip {
  position: relative;
  height: 82px;
  padding-left: 4px;
  border: 2px solid;
  border-radius: 4px;
  font-size: 16px;
  line-height: 80px;
}

.intro { width: 480px; background: #3f5a6e; border-color: #68a5d8; }
.verse { width: 960px; background: #6e5a35; border-color: #cda04f; }
.pre { width: 241px; background: #663b47; border-color: #c45f7e; }
.chorus { width: 638px; background: #576343; border-color: #9fba74; }

/* after the colours above, which border shorthand would reset */
.intro, .verse, .pre, .chorus { color: #dedede; }

.cursor {
  position: absolute;
  left: 243px;
  top: -1px;
  width: 4px;
  height: 80px;
  background: #fff;
}

.add {
  width: 48px;
  height: 80px;
  margin-left: 3px;
  background: #2b2b2b;
  border: 2px solid #444;
  border-radius: 8px;
}
```
